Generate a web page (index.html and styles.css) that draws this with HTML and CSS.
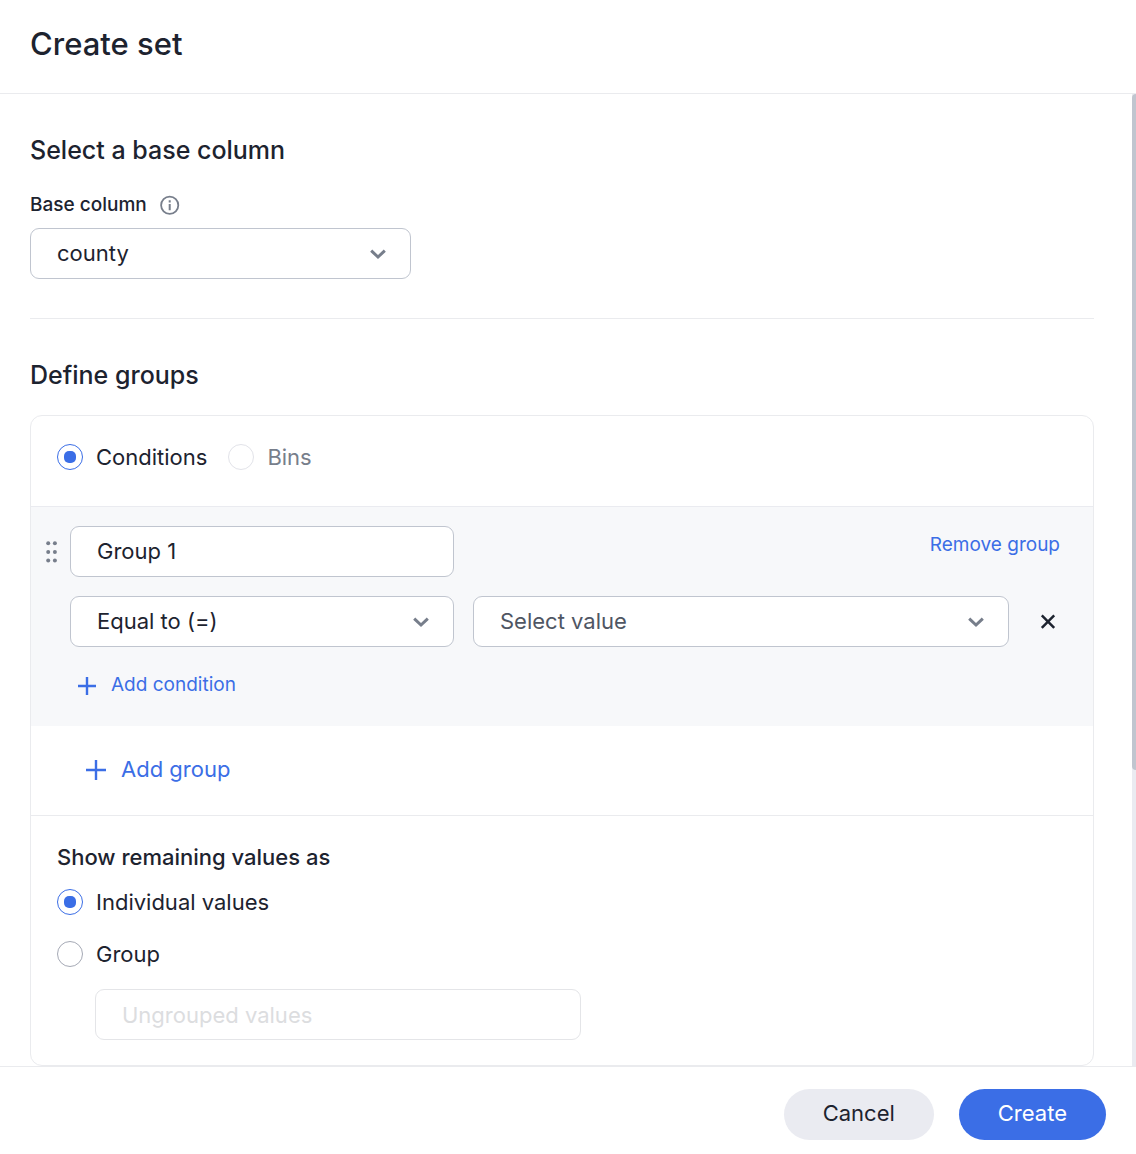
FILE: index.html
```html
<!DOCTYPE html>
<html lang="en">
<head>
  <meta charset="UTF-8">
  <meta name="viewport" content="width=device-width, initial-scale=1.0">
  <title>Create set</title>
  <link rel="stylesheet" href="styles.css">
</head>
<body>
  <form class="dialog">
    <header class="dialog-header">
      <h1>Create set</h1>
    </header>

    <div class="dialog-middle">
      <main class="dialog-body">
        <!-- Base column -->
        <section class="base">
          <h2>Select a base column</h2>
          <div class="label-row">
            <label for="baseColumn">Base column</label>
            <svg class="info" viewBox="0 0 20 20" width="20" height="20" aria-hidden="true">
              <circle cx="9.7" cy="10.3" r="8.6" fill="none" stroke="currentColor" stroke-width="1.8"/>
              <path d="M9.7 8.9V15.3M9.7 5.3V7.4" fill="none" stroke="currentColor" stroke-width="2"/>
            </svg>
          </div>
          <div class="select base-select">
            <select id="baseColumn" class="field">
              <option>county</option>
            </select>
            <svg class="chevron" viewBox="0 0 18 12" width="18" height="12" aria-hidden="true"><path d="M2.2 2.6L9 9L15.8 2.6"/></svg>
          </div>
        </section>

        <!-- Groups -->
        <section class="groups">
          <h2>Define groups</h2>
          <div class="card">
            <div class="mode">
              <label class="radio"><input type="radio" name="mode" checked>Conditions</label>
              <label class="radio"><input type="radio" name="mode" disabled>Bins</label>
            </div>

            <div class="group">
              <svg class="drag" viewBox="0 0 12 24" width="12" height="24" aria-hidden="true">
                <circle cx="2.2" cy="3.2" r="2"/><circle cx="8.9" cy="3.2" r="2"/>
                <circle cx="2.2" cy="11.9" r="2"/><circle cx="8.9" cy="11.9" r="2"/>
                <circle cx="2.2" cy="20.6" r="2"/><circle cx="8.9" cy="20.6" r="2"/>
              </svg>
              <div class="group-main">
                <div class="group-row">
                  <input class="field group-name" type="text" value="Group 1" aria-label="Group name">
                  <button type="button" class="link-btn remove-btn">Remove group</button>
                </div>
                <div class="group-row">
                  <div class="select operator">
                    <select class="field" aria-label="Operator">
                      <option>Equal to (=)</option>
                    </select>
                    <svg class="chevron" viewBox="0 0 18 12" width="18" height="12" aria-hidden="true"><path d="M2.2 2.6L9 9L15.8 2.6"/></svg>
                  </div>
                  <div class="select value">
                    <select class="field empty" aria-label="Value">
                      <option>Select value</option>
                    </select>
                    <svg class="chevron" viewBox="0 0 18 12" width="18" height="12" aria-hidden="true"><path d="M2.2 2.6L9 9L15.8 2.6"/></svg>
                  </div>
                  <button type="button" class="close-btn" aria-label="Remove condition">
                    <svg viewBox="0 0 24 24" width="24" height="24"><path d="M5.8 5.4L18.2 17.8M18.2 5.4L5.8 17.8"/></svg>
                  </button>
                </div>
                <button type="button" class="link-btn add-condition">
                  <svg viewBox="0 0 18 20" width="18" height="20"><path d="M9 2V20M0 11H18"/></svg>
                  Add condition
                </button>
              </div>
            </div>

            <div class="add-row">
              <button type="button" class="link-btn add-group">
                <svg viewBox="0 0 20 22" width="20" height="22"><path d="M10 2V22M0 12H20"/></svg>
                Add group
              </button>
            </div>

            <fieldset class="remaining">
              <legend>Show remaining values as</legend>
              <label class="radio"><input type="radio" name="remaining" checked>Individual values</label>
              <label class="radio"><input type="radio" name="remaining">Group</label>
              <input class="field ungrouped" type="text" placeholder="Ungrouped values" aria-label="Group label" disabled>
            </fieldset>
          </div>
        </section>
      </main>
      <div class="scroll-track">
        <div class="scroll-thumb" style="height: 69.5%"></div>
      </div>
    </div>

    <footer class="dialog-footer">
      <button type="button" class="btn cancel-btn">Cancel</button>
      <button type="submit" class="btn create-btn">Create</button>
    </footer>
  </form>
</body>
</html>
```
FILE: styles.css
```css
* {
  box-sizing: border-box;
}

body {
  margin: 0;
  font-family: Inter, Arial, sans-serif;
  font-size: 22px;
  line-height: 28px;
  color: #1d232f;
  background: #fff;
}

h1, h2 {
  margin: 0;
  font-weight: 500;
}

h1 {
  font-size: 31px;
  line-height: 40px;
}

h2 {
  font-size: 25px;
  line-height: 32px;
}

.dialog {
  display: flex;
  flex-direction: column;
  height: 100vh;
}

.dialog-header {
  padding: 24px 30px 29px;
  border-bottom: 1px solid #eaebee;
}

.dialog-middle {
  display: flex;
  flex: 1;
  min-height: 0;
}

.dialog-body {
  flex: 1;
  overflow-y: auto;
  padding: 40px 38px 428px 30px;
  scrollbar-width: none;
}

/* Scrollbar */
.scroll-track {
  width: 4px;
  background: #eaebf1;
}

.scroll-thumb {
  border-radius: 4px 0 0 4px;
  background: #c0c5cf;
}

/* Base column */
.base {
  padding-bottom: 39px;
  border-bottom: 1px solid #eaebee;
}

.label-row {
  display: flex;
  align-items: center;
  gap: 13px;
  margin: 27px 0 11px;
  font-size: 19px;
  line-height: 24px;
  font-weight: 500;
}

.info {
  color: #777e8b;
}

/* Fields */
.field {
  display: block;
  width: 100%;
  height: 51px;
  padding: 0 26px 2px;
  border: 1px solid #c0c5cf;
  border-radius: 9px;
  background: #fff;
  color: #1d232f;
  font: inherit;
  appearance: none;
}

.field.empty {
  color: #4f5663;
}

.field:disabled {
  padding-bottom: 0;
  border-color: #e4e5e8;
}

.field::placeholder {
  color: #dcdddf;
}

.select {
  position: relative;
}

.base-select {
  width: 381px;
}

.chevron {
  position: absolute;
  top: 20px;
  right: 24px;
  pointer-events: none;
  fill: none;
  stroke: #777e8b;
  stroke-width: 3;
}

/* Groups */
.groups {
  padding-top: 40px;
}

.card {
  margin-top: 24px;
  border: 1px solid #eaebee;
  border-radius: 12px;
}

.mode {
  display: flex;
  gap: 21px;
  padding: 28px 26px 36px;
}

.radio {
  display: flex;
  align-items: center;
  gap: 13px;
  line-height: 26px;
}

.radio input {
  display: grid;
  place-content: center;
  width: 26px;
  height: 26px;
  margin: 0;
  border: 1px solid #a5a9b5;
  border-radius: 50%;
  appearance: none;
}

.radio input:checked {
  border-color: #3b6ee6;
}

.radio input:checked::before {
  content: "";
  width: 12px;
  height: 12px;
  border-radius: 5px;
  background: #3b6ee6;
}

.radio input:disabled {
  border-color: #e2e3e9;
}

.radio:has(input:disabled) {
  color: #777e8b;
}

.group {
  display: flex;
  align-items: flex-start;
  gap: 12px;
  padding: 19px 33px 29px 15px;
  border-top: 1px solid #eaebf0;
  background: #f7f8fa;
}

.drag {
  flex: none;
  margin-top: 14px;
  fill: #777e8b;
}

.group-main {
  flex: 1;
}

.group-row {
  display: flex;
  align-items: center;
  gap: 19px;
  margin-bottom: 19px;
}

.group-name, .operator {
  flex: none;
  width: 384px;
}

.value {
  flex: 1;
}

button {
  padding: 0;
  border: none;
  background: none;
  font: inherit;
  cursor: pointer;
}

.link-btn {
  display: flex;
  align-items: center;
  color: #3b6ee6;
  font-size: 19px;
  line-height: 24px;
}

.link-btn svg {
  stroke: currentColor;
  stroke-width: 2.4;
}

.remove-btn {
  align-self: flex-start;
  margin: 7px 0 0 auto;
}

.close-btn {
  display: flex;
  margin-left: 8px;
}

.close-btn svg {
  stroke: #1d232f;
  stroke-width: 2.5;
}

.add-condition {
  gap: 15px;
  margin: 26px 0 0 8px;
}

.add-row {
  padding: 29px 55px 32px;
  border-bottom: 1px solid #eaebee;
}

.add-group {
  gap: 15px;
  font-size: 22px;
  line-height: 28px;
}

/* Remaining values */
.remaining {
  display: flex;
  flex-direction: column;
  margin: 0;
  padding: 27px 26px 25px;
  border: none;
}

.remaining legend {
  float: left;
  margin-bottom: 18px;
  padding: 0;
  font-weight: 500;
}

.remaining .radio {
  margin-bottom: 26px;
}

.ungrouped {
  width: 486px;
  margin: -4px 0 0 38px;
}

/* Footer */
.dialog-footer {
  display: flex;
  justify-content: flex-end;
  gap: 25px;
  padding: 22px 30px 14px;
  border-top: 1px solid #eaebee;
}

.btn {
  height: 51px;
  padding: 0 39px 3px;
  border-radius: 26px;
}

.cancel-btn {
  background: #eaebf1;
  color: #1d232f;
}

.create-btn {
  background: #3b6ee6;
  color: #fff;
}
```
